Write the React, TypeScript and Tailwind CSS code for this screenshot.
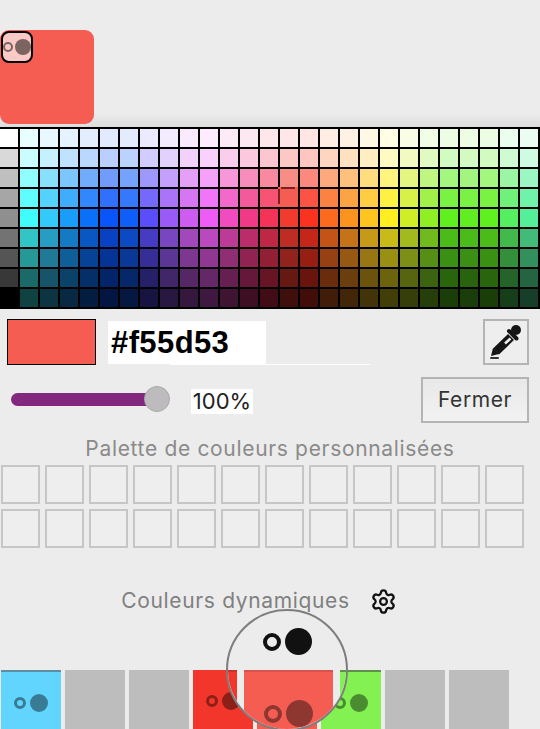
import { Settings } from "lucide-react";

const sans = "font-['Liberation_Sans',Arial,sans-serif]";
const label = "font-['Inter',sans-serif]";

// middle row of the colour table, everything else is tinted or shaded from it
const base = [
  "#808080", "#40fdfd", "#33c9fb", "#1a9cfb", "#0a70fa", "#0a55fa", "#0f5efa", "#5a4dfa", "#9a5af8",
  "#cf5cf0", "#ee5cf5", "#f04cc0", "#f03a88", "#f53358", "#f33a2e", "#fb3220", "#fb6a1f", "#fc931f",
  "#fec420", "#ffee20", "#d0ee25", "#90ee25", "#60f020", "#60ee22", "#60f020", "#55ee60", "#55ef9a",
];

const grays = ["#ffffff", "#d9d9d9", "#bfbfbf", "#a6a6a6", "#8f8f8f", "#737373", "#555555", "#383838", "#000000"];
const tint = [0.88, 0.72, 0.42, 0.16, 0, 0, 0, 0, 0];
const shade = [1, 1, 1, 1, 1, 0.78, 0.6, 0.42, 0.26];

function mix(hex: string, row: number): string {
  const v = [1, 3, 5].map((i) => parseInt(hex.slice(i, i + 2), 16));
  const out = v.map((c) => Math.round((c + (255 - c) * tint[row]) * shade[row]));
  return `rgb(${out[0]},${out[1]},${out[2]})`;
}

function Dots({ ring, dot, gap, border, color }: { ring: number; dot: number; gap: number; border: number; color: string }) {
  return (
    <div className="flex items-center" style={{ gap }}>
      <span className="rounded-full" style={{ width: ring, height: ring, borderWidth: border, borderColor: color }} />
      <span className="rounded-full" style={{ width: dot, height: dot, backgroundColor: color }} />
    </div>
  );
}

function Swatch({ color, top }: { color: string; top?: string }) {
  return (
    <div
      className={`w-[60px] h-[59px] flex justify-center items-start pt-[22px] ${top ?? ""}`}
      style={{ backgroundColor: color }}
    >
      {color !== "#bdbdbd" && <Dots ring={12} dot={18} gap={4} border={3} color="rgba(0,0,0,0.42)" />}
    </div>
  );
}

export default function App() {
  return (
    <div className={`relative w-[540px] h-[729px] overflow-hidden bg-[#ececec] ${sans}`}>
      {/* current colour */}
      <div className="h-[127px] pt-[30px] bg-gradient-to-b from-[#ececec] from-90% to-[#dcdcdc]">
        <div className="relative w-[94px] h-[94px] rounded-[9px] bg-[#f55d53]">
          <div className="absolute left-[1px] top-[1px] w-[32px] h-[32px] rounded-[8px] border-2 border-black bg-[#fbc9c6] flex items-center">
            <Dots ring={10} dot={16} gap={2} border={2} color="#7c6461" />
          </div>
        </div>
      </div>

      {/* colour table */}
      <div className="bg-black py-[2px] grid grid-cols-[repeat(27,18px)] auto-rows-[18px] gap-[2px]">
        {tint.map((_, row) =>
          base.map((c, col) => (
            <div
              key={row + "-" + col}
              className="relative"
              style={{ backgroundColor: col === 0 ? grays[row] : row === 3 && col === 14 ? "#f55d53" : mix(c, row) }}
            >
              {row === 3 && col === 14 && (
                <div className="absolute -left-[2px] -top-[2px] w-[20px] h-[20px] border-t-2 border-l-2 border-[#7a2020]">
                  <span className="absolute -left-[2px] -top-[2px] w-[3px] h-[2px] bg-[#f55d53]" />
                  <span className="absolute right-0 -top-[2px] w-[3px] h-[2px] bg-[#f55d53]" />
                  <span className="absolute -left-[2px] bottom-0 w-[2px] h-[3px] bg-[#f55d53]" />
                </div>
              )}
            </div>
          ))
        )}
      </div>

      {/* hex row */}
      <div className="relative flex pl-[7px] pr-[11px] pt-[10px] h-[58px]">
        <div className="w-[89px] h-[46px] border border-black bg-[#f55d53]" />
        <div className="ml-[12px] mt-[2px] w-[158px] h-[43px] bg-white pl-[3px] flex items-center text-[31px] tracking-[0.4px] leading-none font-bold text-black">
          #f55d53
        </div>
        <div className="absolute left-[170px] top-[55px] w-[200px] h-px bg-white" />
        <button className="ml-auto w-[46px] h-[46px] border-2 border-[#b4b4b4] bg-[#eeeeee] flex items-center justify-center">
          <svg width="42" height="42" viewBox="0 0 42 42">
            <circle cx="31" cy="9" r="5" fill="#151515" />
            <path d="M24 10L31.500 17.500" stroke="#151515" strokeWidth="4" strokeLinecap="round" />
            <path d="M26 16L11 30.500" stroke="#151515" strokeWidth="8.500" />
            <path d="M8 27L14 33L6 35z" fill="#151515" />
            <path d="M25.500 17.500L20 22.500" stroke="#eeeeee" strokeWidth="2.500" />
            <rect x="5" y="36" width="9" height="2" rx="1" fill="#333333" />
          </svg>
        </button>
      </div>

      {/* opacity row */}
      <div className="flex items-center pl-[11px] pr-[11px] h-[45px] mt-[10px]">
        <div className="relative w-[146px] h-[13px] rounded-full bg-[#82287f]">
          <div className="absolute left-[133px] -top-[7px] w-[26px] h-[26px] rounded-full bg-[#bdbbbe] border border-[#a9a9a9]" />
        </div>
        <div className={`ml-[34px] mt-[3px] w-[62px] h-[25px] bg-white flex items-center justify-center text-[22px] leading-none text-[#222222] ${label}`}>
          100%
        </div>
        <button className={`ml-auto w-[108px] h-[46px] border-2 border-[#b4b4b4] bg-gradient-to-b from-[#e8e8e8] to-[#f2f2f2] text-[21px] tracking-[0.6px] leading-none text-[#333333] ${label}`}>
          Fermer
        </button>
      </div>

      {/* custom palette */}
      <div className={`mt-[15px] text-center text-[21px] tracking-[0.67px] leading-[24px] text-[#8a8a8a] ${label}`}>
        Palette de couleurs personnalisées
      </div>
      <div className="mt-[4px] pl-[1px] grid grid-cols-[repeat(12,39px)] gap-x-[5px] gap-y-[5px]">
        {Array.from({ length: 24 }).map((_, i) => (
          <div key={i} className="h-[39px] border-2 border-[#c6c6c6] bg-[#eeeeee]" />
        ))}
      </div>

      {/* dynamic colours */}
      <div className="mt-[40px] flex items-center justify-center gap-[20px] pr-[22px] h-[26px]">
        <span className={`text-[21px] tracking-[0.65px] leading-[24px] text-[#808080] ${label}`}>Couleurs dynamiques</span>
        <Settings size={27} strokeWidth={2} className="text-[#111111]" />
      </div>
      <div className="mt-[56px] pl-[1px] flex gap-[4px]">
        <Swatch color="#62d5ff" top="border-t-2 border-[#5f8ea3]" />
        <Swatch color="#bdbdbd" />
        <Swatch color="#bdbdbd" />
        <Swatch color="#f3362b" />
        <Swatch color="#f55d53" />
        <Swatch color="#84f153" top="border-t-2 border-[#5f8f4a]" />
        <Swatch color="#bdbdbd" />
        <Swatch color="#bdbdbd" />
      </div>

      {/* magnifier over the selected swatch */}
      <div className="absolute left-[226px] top-[609px] w-[122px] h-[122px] rounded-full border-2 border-[#7d7d7d] bg-[#ececec] overflow-hidden">
        <div className="flex justify-center pt-[17px]">
          <Dots ring={18} dot={27} gap={4} border={4} color="#111111" />
        </div>
        <div className="mt-[15px] flex gap-[7px]">
          <div className="w-[9px] h-[70px] shrink-0 bg-[#f3362b] border-t-2 border-[#c9332a]" />
          <div className="w-[89px] h-[70px] shrink-0 bg-[#f55d53] border-t-2 border-[#d5544c] flex justify-center items-start pt-[28px]">
            <Dots ring={18} dot={27} gap={4} border={4} color="rgba(0,0,0,0.42)" />
          </div>
          <div className="w-[9px] h-[70px] shrink-0 bg-[#84f153] border-t-2 border-[#5f8f4a]" />
        </div>
      </div>
    </div>
  );
}
